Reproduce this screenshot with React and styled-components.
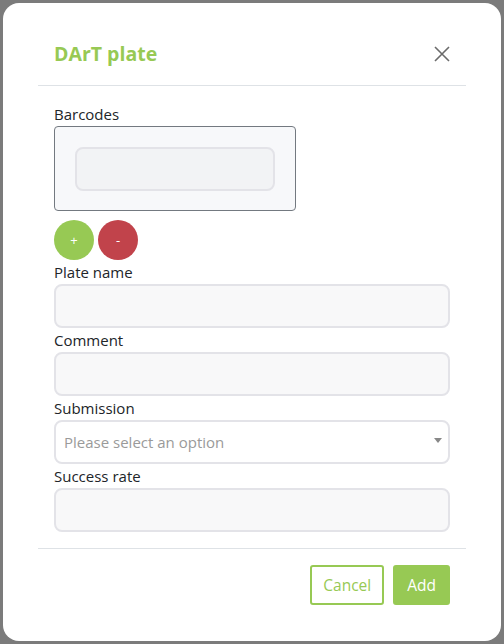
import React from "react";
import styled, { createGlobalStyle } from "styled-components";

const GREEN = "#97c954";
const RED = "#c1434b";

const Global = createGlobalStyle`
  html, body { margin: 0; padding: 0; }
  body {
    background: #7b7b7b;
    font-family: "Open Sans", "Noto Sans", sans-serif;
    color: #212529;
  }
  * { box-sizing: border-box; }
`;

const Backdrop = styled.div`
  width: 504px;
  height: 644px;
  padding: 3px;
  display: flex;
  background: #7b7b7b;
`;

const Modal = styled.div`
  flex: 1;
  background: #fff;
  border-radius: 16px;
  display: flex;
  flex-direction: column;
  overflow: hidden;
`;

const Header = styled.div`
  margin: 0 35px;
  height: 83px;
  padding: 19px 16px 0;
  display: flex;
  align-items: center;
  justify-content: space-between;
  border-bottom: 1px solid #dee2e6;
`;

const Title = styled.h5`
  margin: 0;
  font-size: 19.5px;
  font-weight: 700;
  color: ${GREEN};
  line-height: 28px;
`;

const CloseButton = styled.button`
  border: none;
  background: none;
  padding: 0;
  width: 16px;
  height: 16px;
  display: flex;
  cursor: pointer;
`;

const Body = styled.div`
  padding: 15.5px 51px 0;
  display: flex;
  flex-direction: column;
`;

const Label = styled.label`
  display: block;
  font-size: 15px;
  line-height: 24.5px;
  color: #212529;
`;

const BarcodeBox = styled.div`
  width: 242px;
  height: 85px;
  border: 1px solid #737980;
  border-radius: 4px;
  background: #f7f8fa;
  padding: 20px;
`;

const Input = styled.input`
  display: block;
  width: ${(p) => p.$width || "100%"};
  height: 43.5px;
  border: 2px solid #e3e3e8;
  border-radius: 8px;
  background: ${(p) => p.$bg || "#f8f8f9"};
  font-family: inherit;
  font-size: 15px;
  padding: 0 8px;
  outline: none;
`;

const CircleRow = styled.div`
  display: flex;
  gap: 4px;
  margin: 9px 0 -0.5px;
`;

const Circle = styled.button`
  width: 40px;
  height: 40px;
  border-radius: 50%;
  border: none;
  background: ${(p) => p.$color};
  color: #fff;
  font-family: inherit;
  font-size: 13px;
  line-height: 1;
  padding: 0;
  display: flex;
  align-items: center;
  justify-content: center;
  cursor: pointer;
`;

const SelectWrap = styled.div`
  height: 43.5px;
  border: 2px solid #e3e3e8;
  border-radius: 8px;
  background: #fff;
  display: flex;
  align-items: center;
  padding: 0 8px;
`;

const Placeholder = styled.span`
  font-size: 15px;
  color: #9a9a9a;
  flex: 1;
`;

const Caret = styled.span`
  width: 0;
  height: 0;
  border-left: 4px solid transparent;
  border-right: 4px solid transparent;
  border-top: 5px solid #888;
  margin-right: -2px;
  margin-top: -2px;
`;

const Footer = styled.div`
  margin: 16px 35px 0;
  padding: 16px 16px 0;
  border-top: 1px solid #dee2e6;
  display: flex;
  justify-content: flex-end;
  gap: 9px;
`;

const Button = styled.button`
  height: 40px;
  padding: 0 ${(p) => (p.$outline ? "11px" : "12px")};
  border-radius: 3px;
  border: 2px solid ${GREEN};
  background: ${(p) => (p.$outline ? "#fff" : GREEN)};
  color: ${(p) => (p.$outline ? GREEN : "#fff")};
  font-family: inherit;
  font-size: 15.5px;
  cursor: pointer;
`;

export default function App() {
  return (
    <>
      <Global />
      <Backdrop>
        <Modal>
          <Header>
            <Title>DArT plate</Title>
            <CloseButton aria-label="Close">
              <svg width="16" height="16" viewBox="0 0 16 16">
                <path d="M1 1 L15 15 M15 1 L1 15" stroke="#6b6b6b" strokeWidth="1.6" fill="none" />
              </svg>
            </CloseButton>
          </Header>
          <Body>
            <Label>Barcodes</Label>
            <BarcodeBox>
              <Input $width="200px" $bg="#f2f3f5" />
            </BarcodeBox>
            <CircleRow>
              <Circle $color={GREEN}>+</Circle>
              <Circle $color={RED}>-</Circle>
            </CircleRow>
            <Label>Plate name</Label>
            <Input />
            <Label>Comment</Label>
            <Input />
            <Label>Submission</Label>
            <SelectWrap>
              <Placeholder>Please select an option</Placeholder>
              <Caret />
            </SelectWrap>
            <Label>Success rate</Label>
            <Input />
          </Body>
          <Footer>
            <Button $outline>Cancel</Button>
            <Button>Add</Button>
          </Footer>
        </Modal>
      </Backdrop>
    </>
  );
}
